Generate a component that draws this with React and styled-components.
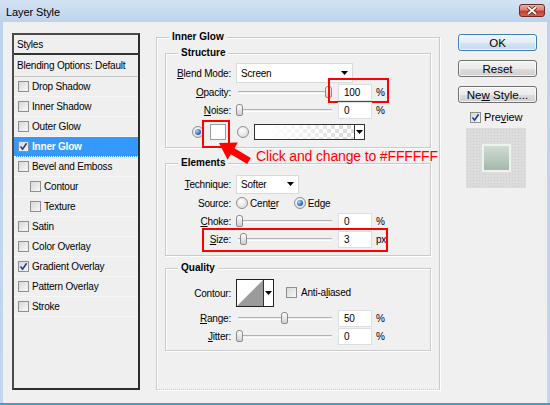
import React from 'react'
import styled, { createGlobalStyle } from 'styled-components'

const GlobalStyle = createGlobalStyle`
  html, body { margin: 0; padding: 0; background: #fff; }
  body { font-family: "Liberation Sans", Arial, sans-serif; }
`

const styleItems = [
  { name: 'Drop Shadow' },
  { name: 'Inner Shadow' },
  { name: 'Outer Glow' },
  { name: 'Inner Glow', checked: true, active: true },
  { name: 'Bevel and Emboss' },
  { name: 'Contour', indent: true },
  { name: 'Texture', indent: true },
  { name: 'Satin' },
  { name: 'Color Overlay' },
  { name: 'Gradient Overlay', checked: true },
  { name: 'Pattern Overlay' },
  { name: 'Stroke' },
]

const Arrow = () => (
  <svg width="7" height="4" viewBox="0 0 7 4">
    <path d="M0 0 H7 L3.5 4 Z" fill="#000" />
  </svg>
)

const CheckBox = ({ checked }) => (
  <Check>
    {checked && (
      <svg width="9" height="9" viewBox="0 0 9 9">
        <path d="M1.5 4.5 L3.6 7.2 L7.6 1.2" fill="none" stroke="#1f3f93" strokeWidth="1.6" />
      </svg>
    )}
  </Check>
)

const SliderRow = ({ label, value, field, unit, mark, children }) => (
  <Row>
    <Label>{label}</Label>
    <Slider>
      <Thumb $value={value} />
    </Slider>
    <Field>{field}</Field>
    <Unit>{unit}</Unit>
    {mark}
    {children}
  </Row>
)

const App = () => {
  return (
    <Window>
      <GlobalStyle />
      <TitleBar>
        <Title>Layer Style</Title>
        <CloseBtn>
          <svg width="12" height="9" viewBox="0 0 12 9">
            <path d="M2 1 L10 8 M10 1 L2 8" stroke="#5a1a14" strokeWidth="3.4" />
            <path d="M2 1 L10 8 M10 1 L2 8" stroke="#fff" strokeWidth="1.8" />
          </svg>
        </CloseBtn>
      </TitleBar>

      <Body>
        <StylesList>
          <ListHead>Styles</ListHead>
          <ListOptions>Blending Options: Default</ListOptions>
          {styleItems.map(item => (
            <Item key={item.name} $active={item.active} $indent={item.indent}>
              <CheckBox checked={item.checked} />
              <span>{item.name}</span>
            </Item>
          ))}
        </StylesList>

        <Group $outer>
          <Legend>Inner Glow</Legend>

          <Group $pad="9px 0 5px">
            <Legend>Structure</Legend>
            <Row $h={20}>
              <Label><u>B</u>lend Mode:</Label>
              <Select $w={117} $h={20}>
                <span>Screen</span>
                <Arrow />
              </Select>
            </Row>
            <SliderRow
              label={<><u>O</u>pacity:</>}
              value={100}
              field="100"
              unit="%"
              mark={<Mark $x={162} $y={-5} $w={61} $h={25} />}
            />
            <SliderRow label={<><u>N</u>oise:</>} value={0} field="0" unit="%" />
            <Row $h={20} $mt={3} $indent={26}>
              <Radio $on />
              <Swatch />
              <Radio />
              <GradientPick>
                <GradientFill />
                <PickArrow><Arrow /></PickArrow>
              </GradientPick>
              <Mark $x={36} $y={-2} $w={28} $h={28} />
            </Row>
          </Group>

          <Group $mt={15} $pad="10px 0 7px">
            <Legend>Elements</Legend>
            <Row $h={20}>
              <Label><u>T</u>echnique:</Label>
              <Select $w={63} $h={19}>
                <span>Softer</span>
                <Arrow />
              </Select>
            </Row>
            <Row>
              <Label>Source:</Label>
              <Radio />
              <Option>Cent<u>e</u>r</Option>
              <Radio $on />
              <Option>Ed<u>g</u>e</Option>
            </Row>
            <SliderRow label={<><u>C</u>hoke:</>} value={0} field="0" unit="%" />
            <SliderRow
              label={<><u>S</u>ize:</>}
              value={4}
              field="3"
              unit="px"
              mark={<Mark $x={36} $y={-2} $w={186} $h={24} />}
            />
          </Group>

          <Group $mt={12} $pad="10px 0 5px">
            <Legend>Quality</Legend>
            <Row $h={28}>
              <Label>Contour:</Label>
              <ContourPick>
                <svg width="26" height="26" viewBox="0 0 26 26">
                  <polygon points="0,26 26,0 26,26" fill="#9b9b9b" />
                </svg>
                <PickArrow><Arrow /></PickArrow>
              </ContourPick>
              <AntiAlias>
                <CheckBox />
                <span>Anti-a<u>l</u>iased</span>
              </AntiAlias>
            </Row>
            <Row $mt={2}>
              <SliderLabelled label={<><u>R</u>ange:</>} value={50} field="50" />
            </Row>
            <Row>
              <SliderLabelled label={<><u>J</u>itter:</>} value={0} field="0" />
            </Row>
          </Group>

          <Callout>
            <svg width="42" height="30" viewBox="0 0 42 30">
              <polygon
                points="7,7 25.8,6.6 22.5,12.2 38.8,22 35.2,28 18.9,18.2 15.6,23.8"
                fill="#f00"
              />
            </svg>
            <CalloutText>Click and change to #FFFFFF</CalloutText>
          </Callout>
        </Group>

        <Side>
          <Button $default>OK</Button>
          <Button>Reset</Button>
          <Button>Ne<u>w</u> Style...</Button>
          <PreviewRow>
            <CheckBox checked />
            <span>Pre<u>v</u>iew</span>
          </PreviewRow>
          <PreviewBox>
            <PreviewSample />
          </PreviewBox>
        </Side>
      </Body>
    </Window>
  )
}

const SliderLabelled = ({ label, value, field }) => (
  <>
    <Label>{label}</Label>
    <Slider>
      <Thumb $value={value} />
    </Slider>
    <Field>{field}</Field>
    <Unit>%</Unit>
  </>
)

export default App

const Window = styled.div`
  width: 550px;
  height: 405px;
  box-sizing: border-box;
  display: flex;
  flex-direction: column;
  overflow: hidden;
  background: linear-gradient(#d3e3f4 0px, #bdd3eb 22px, #c2d7ee 100%);
  border-bottom: 2px solid #3b9fd8;
  font-size: 10px;
  letter-spacing: -0.2px;
  color: #000;
`

const TitleBar = styled.div`
  height: 22px;
  flex: none;
  display: flex;
  align-items: center;
  justify-content: space-between;
  padding: 0 5px 0 6px;
`

const Title = styled.span`
  font-size: 11px;
  letter-spacing: -0.1px;
  margin-top: 1px;
`

const CloseBtn = styled.span`
  width: 26px;
  height: 13px;
  box-sizing: border-box;
  border: 1px solid #6e2b25;
  border-radius: 3px;
  background: linear-gradient(#eab0a6 0%, #d98373 45%, #c33f2e 55%, #d4604c 100%);
  display: flex;
  align-items: center;
  justify-content: center;
  margin-top: -1px;
`

const Body = styled.div`
  flex: 1;
  margin: 0 3px;
  background: #f0f0f0;
  display: flex;
  align-items: flex-start;
  padding: 11px 9px 0;
`

const StylesList = styled.div`
  width: 128px;
  height: 357px;
  flex: none;
  box-sizing: border-box;
  border: 2px solid #3a3a3a;
  border-color: #4a4a4a #2e2e2e #2e2e2e #4a4a4a;
  background: #efefef;
`

const ListHead = styled.div`
  height: 20px;
  box-sizing: border-box;
  border-bottom: 2px solid #333;
  padding-left: 3px;
  display: flex;
  align-items: center;
`

const ListOptions = styled.div`
  height: 22px;
  box-sizing: border-box;
  border-bottom: 1px solid #c6c6c6;
  padding-left: 3px;
  display: flex;
  align-items: center;
`

const Item = styled.div`
  height: 20px;
  box-sizing: border-box;
  display: flex;
  align-items: center;
  gap: 3px;
  padding-left: ${p => (p.$indent ? 16 : 4)}px;
  border-bottom: 1px dotted #fdfdfd;
  background: ${p => (p.$active ? '#3399ff' : 'transparent')};
  color: ${p => (p.$active ? '#fff' : '#000')};
  font-weight: ${p => (p.$active ? 'bold' : 'normal')};
`

const Check = styled.span`
  width: 11px;
  height: 11px;
  flex: none;
  box-sizing: border-box;
  border: 1px solid #8e8f8f;
  background: linear-gradient(135deg, #d8d8d8, #f8f8f8);
  display: inline-flex;
  align-items: center;
  justify-content: center;
`

const Group = styled.div`
  position: relative;
  box-sizing: border-box;
  border: 1px solid #cacaca;
  box-shadow: inset 1px 1px 0 #fff, 1px 1px 0 #fff;
  margin-top: ${p => p.$mt || 0}px;
  padding: ${p => p.$pad || 0};
  ${p =>
    p.$outer &&
    `
    width: 284px;
    height: 353px;
    flex: none;
    margin-left: 16px;
    margin-top: 4px;
    padding: 15px 8px 0;
    border-bottom-style: dotted;
  `}
`

const Legend = styled.span`
  position: absolute;
  top: -7px;
  left: 12px;
  padding: 0 3px;
  background: #f0f0f0;
  font-weight: bold;
  letter-spacing: 0;
  line-height: 12px;
`

const Row = styled.div`
  position: relative;
  display: flex;
  align-items: center;
  height: ${p => p.$h || 18}px;
  margin-top: ${p => p.$mt || 0}px;
  padding-left: ${p => p.$indent || 0}px;
`

const Label = styled.span`
  width: 70px;
  flex: none;
  box-sizing: border-box;
  padding-right: 5px;
  text-align: right;
`

const Select = styled.div`
  width: ${p => p.$w}px;
  height: ${p => p.$h}px;
  box-sizing: border-box;
  background: #fff;
  border: 1px solid #d9d9d9;
  display: flex;
  align-items: center;
  justify-content: space-between;
  padding: 0 4px 0 4px;
`

const Slider = styled.div`
  position: relative;
  width: 96px;
  height: 12px;
  flex: none;

  &::before {
    content: '';
    position: absolute;
    left: 2px;
    right: 0;
    top: 5px;
    height: 1px;
    border-top: 1px solid #b2b2b2;
    border-bottom: 1px solid #fff;
  }
`

const Thumb = styled.span`
  position: absolute;
  top: 0;
  left: calc((100% - 7px) * ${p => p.$value / 100});
  width: 7px;
  height: 12px;
  box-sizing: border-box;
  border: 1px solid #8a8a8a;
  border-radius: 3px 3px 2px 2px;
  background: linear-gradient(#fdfdfd, #d0d0d0);
`

const Field = styled.div`
  width: 34px;
  height: 17px;
  flex: none;
  margin-left: 6px;
  box-sizing: border-box;
  background: #fff;
  border: 1px solid #dedede;
  padding-left: 5px;
  display: flex;
  align-items: center;
`

const Unit = styled.span`
  margin-left: 4px;
`

const Mark = styled.span`
  position: absolute;
  left: ${p => p.$x}px;
  top: ${p => p.$y}px;
  width: ${p => p.$w}px;
  height: ${p => p.$h}px;
  box-sizing: border-box;
  border: 2px solid #f00;
  pointer-events: none;
`

const Radio = styled.span`
  width: 12px;
  height: 12px;
  flex: none;
  box-sizing: border-box;
  border-radius: 50%;
  border: 1px solid #8e8f8f;
  background: radial-gradient(circle at 40% 35%, #fff, #d2d2d2);
  display: inline-flex;
  align-items: center;
  justify-content: center;

  &::after {
    content: '';
    display: ${p => (p.$on ? 'block' : 'none')};
    width: 6px;
    height: 6px;
    border-radius: 50%;
    background: radial-gradient(circle at 35% 35%, #a6dbff, #1d70c4 60%, #0d4b8e);
  }
`

const Option = styled.span`
  margin: 0 15px 0 2px;
`

const Swatch = styled.span`
  width: 16px;
  height: 16px;
  flex: none;
  box-sizing: border-box;
  margin: 0 11px 0 6px;
  background: #fff;
  border: 1px solid #9c9c9c;
`

const GradientPick = styled.div`
  width: 111px;
  height: 16px;
  margin-left: 5px;
  box-sizing: border-box;
  border: 1px solid #333;
  display: flex;
`

const GradientFill = styled.span`
  flex: 1;
  background-color: #fff;
  background-image: linear-gradient(to right, #fff 15%, rgba(255, 255, 255, 0) 90%),
    linear-gradient(45deg, #dcdcdc 25%, transparent 25%, transparent 75%, #dcdcdc 75%),
    linear-gradient(45deg, #dcdcdc 25%, transparent 25%, transparent 75%, #dcdcdc 75%);
  background-size: 100% 100%, 8px 8px, 8px 8px;
  background-position: 0 0, 0 0, 4px 4px;
`

const PickArrow = styled.span`
  width: 9px;
  flex: none;
  border-left: 1px solid #333;
  background: #fff;
  display: flex;
  align-items: center;
  justify-content: center;
`

const ContourPick = styled.div`
  width: 38px;
  height: 28px;
  box-sizing: border-box;
  border: 1px solid #222;
  background: #fff;
  display: flex;
`

const AntiAlias = styled.div`
  display: flex;
  align-items: center;
  gap: 4px;
  margin-left: 12px;
  margin-top: -2px;
`

const Callout = styled.div`
  position: absolute;
  left: 55px;
  top: 98px;
  display: flex;
  align-items: flex-start;
  pointer-events: none;
`

const CalloutText = styled.span`
  margin: 12px 0 0 2px;
  font-size: 14px;
  letter-spacing: -0.15px;
  line-height: 16px;
  color: #f00;
  white-space: nowrap;
`

const Side = styled.div`
  width: 80px;
  flex: none;
  margin: 1px 0 0 18px;
  display: flex;
  flex-direction: column;
  align-items: flex-start;
  gap: 9px;
`

const Button = styled.button`
  width: 79px;
  height: 17px;
  padding: 0;
  box-sizing: border-box;
  border: 1px solid ${p => (p.$default ? '#3c7fb1' : '#707070')};
  border-radius: 3px;
  background: ${p =>
    p.$default
      ? 'linear-gradient(#eef6fc 0%, #e2eef8 50%, #d2e4f3 51%, #c4dcf0 100%)'
      : 'linear-gradient(#f3f3f3 0%, #ebebeb 50%, #dddddd 51%, #cfcfcf 100%)'};
  box-shadow: inset 0 0 0 1px rgba(255, 255, 255, 0.7);
  font-family: "Liberation Sans", Arial, sans-serif;
  font-size: 11.5px;
  letter-spacing: 0;
  color: #000;
  cursor: default;
`

const PreviewRow = styled.div`
  display: flex;
  align-items: center;
  gap: 3px;
  height: 14px;
  margin: -2px 0 0 12px;
  font-size: 11px;
  letter-spacing: -0.1px;
`

const PreviewBox = styled.div`
  width: 60px;
  height: 60px;
  margin: -5px 0 0 8px;
  background-color: #dcdcdc;
  background-image: radial-gradient(#cdcdcd 0.8px, transparent 0.8px);
  background-size: 3px 3px;
  display: flex;
  align-items: center;
  justify-content: center;
`

const PreviewSample = styled.span`
  width: 29px;
  height: 28px;
  box-sizing: border-box;
  border: 2px solid #eef2ef;
  background: linear-gradient(#cfdcd3, #b8c9bd 55%, #a4b8aa);
`
